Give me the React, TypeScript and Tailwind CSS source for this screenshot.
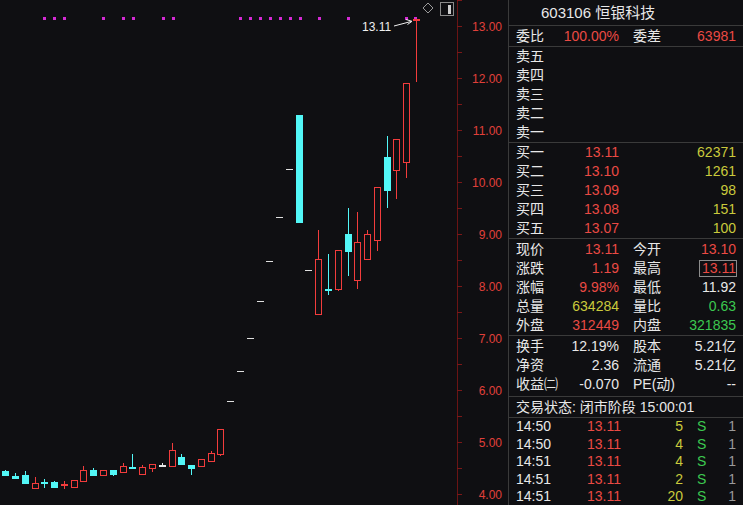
import React from 'react';

type Kind = 'r' | 'c' | 'cx' | 'rx' | 'wx';

// [left, bodyTop, bodyBottom, wickTop, wickBottom, kind]
const CANDLES: [number, number, number, number, number, Kind][] = [
  [2, 471, 475, 470, 476, 'c'],
  [12, 476, 478, 473, 479, 'c'],
  [22, 475, 483, 471, 483, 'c'],
  [32, 483, 488, 477, 488, 'r'],
  [41, 482, 483, 479, 488, 'cx'],
  [51, 482, 487, 481, 488, 'c'],
  [61, 484, 485, 481, 489, 'rx'],
  [71, 480, 487, 480, 487, 'r'],
  [80, 470, 481, 466, 481, 'r'],
  [90, 470, 475, 468, 476, 'c'],
  [100, 470, 475, 470, 476, 'r'],
  [110, 470, 474, 470, 476, 'c'],
  [120, 466, 472, 463, 473, 'r'],
  [129, 467, 468, 454, 469, 'cx'],
  [139, 467, 474, 465, 474, 'r'],
  [149, 464, 468, 464, 472, 'r'],
  [159, 465, 466, 463, 467, 'wx'],
  [169, 450, 466, 443, 466, 'r'],
  [178, 457, 464, 454, 465, 'c'],
  [188, 465, 468, 465, 475, 'c'],
  [198, 459, 466, 459, 467, 'r'],
  [208, 453, 461, 451, 461, 'r'],
  [217, 429, 454, 429, 456, 'r'],
  [296, 115, 222, 115, 222, 'c'],
  [315, 259, 314, 230, 314, 'r'],
  [325, 289, 290, 254, 295, 'cx'],
  [335, 250, 289, 250, 291, 'r'],
  [345, 234, 251, 208, 276, 'c'],
  [354, 242, 280, 212, 289, 'r'],
  [364, 234, 259, 230, 259, 'r'],
  [374, 187, 240, 187, 251, 'r'],
  [384, 157, 190, 136, 208, 'c'],
  [393, 139, 170, 139, 199, 'r'],
  [403, 83, 162, 83, 178, 'r'],
];

// one-price days (limit up at open)
const DASHES: [number, number][] = [
  [227, 401], [237, 371], [247, 338], [257, 301], [266, 261], [276, 217], [286, 169], [305, 270],
];

const DOTS = [43, 53, 63, 102, 122, 132, 162, 172, 239, 249, 259, 269, 279, 289, 299, 318, 347, 405, 414];

const AXIS = ['13.00', '12.00', '11.00', '10.00', '9.00', '8.00', '7.00', '6.00', '5.00', '4.00'];

const RED = '#f23c3c';
const CYAN = '#52f7f7';
const BG = '#0f0f12';

function Chart() {
  return (
    <svg width={508} height={505} className="block shrink-0" style={{ fontFamily: '"Liberation Sans", Arial, sans-serif' }}>
      <g shapeRendering="crispEdges">
        {DOTS.map((x) => (
          <rect key={x} x={x} y={17} width={3} height={3} fill="#d42ad4" />
        ))}

        {CANDLES.map(([x, top, bottom, wt, wb, kind]) => {
          const cx = x + 3.5;
          if (kind === 'r') {
            return (
              <g key={x}>
                <line x1={cx} y1={wt} x2={cx} y2={wb} stroke={RED} />
                <rect x={x + 0.5} y={top + 0.5} width={6} height={bottom - top} fill={BG} stroke={RED} />
              </g>
            );
          }
          const col = kind === 'c' || kind === 'cx' ? CYAN : kind === 'rx' ? RED : '#e6e6e6';
          return (
            <g key={x}>
              <line x1={cx} y1={wt} x2={cx} y2={wb} stroke={col} />
              <rect x={x} y={top} width={7} height={bottom - top + 1} fill={col} />
            </g>
          );
        })}

        {DASHES.map(([x, y]) => (
          <line key={x} x1={x} y1={y + 0.5} x2={x + 7} y2={y + 0.5} stroke="#e0e0e0" />
        ))}

        {/* last day: limit-up */}
        <line x1={416.5} y1={20} x2={416.5} y2={82} stroke={RED} />
        <rect x={413} y={19} width={7} height={2} fill={RED} />

        {/* toolbar icons */}
        <rect x={440.5} y={2.5} width={13} height={13} fill="none" stroke="#8a8a8a" />
        <rect x={448} y={5} width={3} height={9} fill="#cfcfcf" />

        {/* price axis */}
        <line x1={457.5} y1={0} x2={457.5} y2={505} stroke="#6b1414" />
        {Array.from({ length: 20 }, (_, i) => (
          <line key={i} x1={457} y1={26 * i + 0.5} x2={462} y2={26 * i + 0.5} stroke="#7a1818" />
        ))}
      </g>

      {/* high marker */}
      <text x={362} y={31} fill="#f0f0f0" fontSize={12}>13.11</text>
      <line x1={394} y1={26} x2={411} y2={21.5} stroke="#f0f0f0" />
      <path d="M406 19.5 L412 21.3 L407.5 24.5" fill="none" stroke="#f0f0f0" />

      <path d="M428 3 L433 8 L428 13 L423 8 Z" fill="none" stroke="#9a9a9a" />

      {AXIS.map((label, i) => (
        <text key={label} x={502} y={26 + 52 * i + 4.5} fill="#e0403a" fontSize={12} textAnchor="end">
          {label}
        </text>
      ))}
    </svg>
  );
}

const TXT_RED = 'text-[#ea4a44]';
const TXT_YEL = 'text-[#caca3c]';
const TXT_GRN = 'text-[#3cc850]';
const TXT_WHT = 'text-[#e8e8e8]';

function Row({
  l1,
  v1,
  c1 = TXT_WHT,
  l2,
  v2,
  c2 = TXT_WHT,
  boxed,
}: {
  l1: string;
  v1?: string;
  c1?: string;
  l2?: string;
  v2?: string;
  c2?: string;
  boxed?: boolean;
}) {
  return (
    <div className="flex h-[19px] leading-[19px]">
      <div className="w-[110px] pl-[7px] flex justify-between">
        <span>{l1}</span>
        <span className={c1}>{v1}</span>
      </div>
      <div className="w-[117px] pl-[14px] flex justify-between items-center">
        <span>{l2}</span>
        {boxed ? (
          <span className={`${c2} border border-[#8c8c8c] leading-[15px] pl-[2px] -mr-[1px]`}>{v2}</span>
        ) : (
          <span className={c2}>{v2}</span>
        )}
      </div>
    </div>
  );
}

const TICKS: [string, string][] = [
  ['14:50', '5'],
  ['14:50', '4'],
  ['14:51', '4'],
  ['14:51', '2'],
  ['14:51', '20'],
];

function Quote() {
  return (
    <div
      className="w-[235px] h-[505px] border-l border-[#3a3a3a] text-[14px] text-[#e8e8e8] overflow-hidden"
      style={{ fontFamily: '"Liberation Sans", "Noto Sans CJK SC", sans-serif' }}
    >
      <div className="h-[26px] leading-[25px] pl-[32px] text-[15px] border-b border-[#3a3a3a]">603106 恒银科技</div>

      <div className="h-[21px] pt-[1px] border-b border-[#3a3a3a]">
        <Row l1="委比" v1="100.00%" c1={TXT_RED} l2="委差" v2="63981" c2={TXT_RED} />
      </div>

      <div className="border-b border-[#3a3a3a]">
        {['卖五', '卖四', '卖三', '卖二', '卖一'].map((s) => (
          <Row key={s} l1={s} />
        ))}
      </div>

      <div className="border-b border-[#3a3a3a]">
        <Row l1="买一" v1="13.11" c1={TXT_RED} v2="62371" c2={TXT_YEL} />
        <Row l1="买二" v1="13.10" c1={TXT_RED} v2="1261" c2={TXT_YEL} />
        <Row l1="买三" v1="13.09" c1={TXT_RED} v2="98" c2={TXT_YEL} />
        <Row l1="买四" v1="13.08" c1={TXT_RED} v2="151" c2={TXT_YEL} />
        <Row l1="买五" v1="13.07" c1={TXT_RED} v2="100" c2={TXT_YEL} />
      </div>

      <div className="pt-[1px] border-b border-[#3a3a3a]">
        <Row l1="现价" v1="13.11" c1={TXT_RED} l2="今开" v2="13.10" c2={TXT_RED} />
        <Row l1="涨跌" v1="1.19" c1={TXT_RED} l2="最高" v2="13.11" c2={TXT_RED} boxed />
        <Row l1="涨幅" v1="9.98%" c1={TXT_RED} l2="最低" v2="11.92" />
        <Row l1="总量" v1="634284" c1={TXT_YEL} l2="量比" v2="0.63" c2={TXT_GRN} />
        <Row l1="外盘" v1="312449" c1={TXT_RED} l2="内盘" v2="321835" c2={TXT_GRN} />
      </div>

      <div className="pt-[1px] pb-[2px] border-b border-[#3a3a3a]">
        <Row l1="换手" v1="12.19%" l2="股本" v2="5.21亿" />
        <Row l1="净资" v1="2.36" l2="流通" v2="5.21亿" />
        <Row l1="收益㈡" v1="-0.070" l2="PE(动)" v2="--" />
      </div>

      <div className="h-[21px] leading-[20px] pl-[7px] border-b border-[#3a3a3a]">交易状态: 闭市阶段 15:00:01</div>

      {TICKS.map(([t, v], i) => (
        <div key={i} className="flex h-[17.5px] leading-[17px]">
          <span className="w-[60px] pl-[7px]">{t}</span>
          <span className={`w-[52px] text-right ${TXT_RED}`}>13.11</span>
          <span className={`w-[62px] text-right ${TXT_YEL}`}>{v}</span>
          <span className={`w-[21px] pl-[14px] ${TXT_GRN}`}>S</span>
          <span className="w-[32px] text-right text-[#9a9a9a]">1</span>
        </div>
      ))}
    </div>
  );
}

export default function App() {
  return (
    <div className="w-[743px] h-[505px] bg-[#0f0f12] flex overflow-hidden">
      <Chart />
      <Quote />
    </div>
  );
}
